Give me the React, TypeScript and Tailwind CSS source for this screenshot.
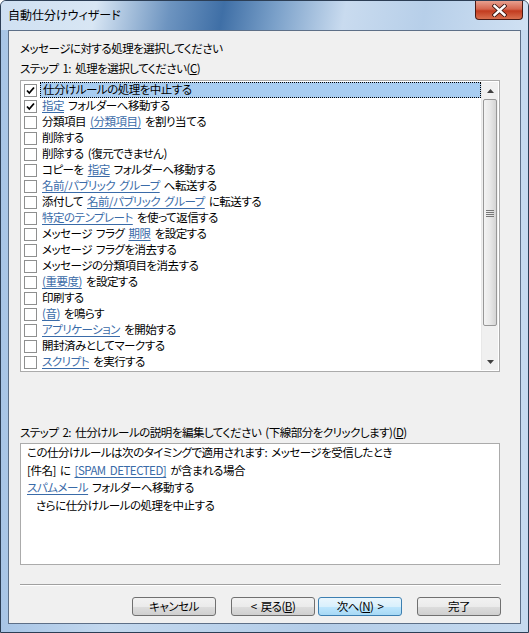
import React from 'react';

const font = "font-['Meiryo_UI','Noto_Sans_CJK_JP',sans-serif] [font-feature-settings:'palt']";

const rules: { text: string; checked?: boolean }[] = [
    { text: '仕分けルールの処理を中止する', checked: true },
    { text: '{指定} フォルダーへ移動する', checked: true },
    { text: '分類項目 {(分類項目)} を割り当てる' },
    { text: '削除する' },
    { text: '削除する (復元できません)' },
    { text: 'コピーを {指定} フォルダーへ移動する' },
    { text: '{名前/パブリック グループ} へ転送する' },
    { text: '添付して {名前/パブリック グループ} に転送する' },
    { text: '{特定のテンプレート} を使って返信する' },
    { text: 'メッセージ フラグ {期限} を設定する' },
    { text: 'メッセージ フラグを消去する' },
    { text: 'メッセージの分類項目を消去する' },
    { text: '{(重要度)} を設定する' },
    { text: '印刷する' },
    { text: '{(音)} を鳴らす' },
    { text: '{アプリケーション} を開始する' },
    { text: '開封済みとしてマークする' },
    { text: '{スクリプト} を実行する' },
];

// "{...}" marks the underlined link parts
const RuleText = ({ text }: { text: string }) => (
    <>
        {text.split(/(\{[^}]+\})/).map((part, i) =>
            part.startsWith('{') ? (
                <span key={i} className="text-[#3a6ba8] underline underline-offset-2">{part.slice(1, -1)}</span>
            ) : (
                <span key={i}>{part}</span>
            )
        )}
    </>
);

const CheckBox = ({ checked }: { checked?: boolean }) => (
    <div className="w-[13px] h-[13px] shrink-0 border border-[#8e8f8f] bg-white flex items-center justify-center">
        {checked && (
            <svg width="9" height="9" viewBox="0 0 9 9">
                <path d="M1 4.5 L3.3 7 L8 1.5" fill="none" stroke="#000" strokeWidth="1.8" />
            </svg>
        )}
    </div>
);

const Button = ({ children, primary }: { children: React.ReactNode; primary?: boolean }) => (
    <div
        className={`h-[19px] w-[84px] rounded-[3px] border flex items-center justify-center leading-none ${
            primary
                ? 'border-[#3c7fb1] bg-[linear-gradient(#eaf6fd_0%,#d9f0fc_50%,#bee6fd_51%,#a7d9f5_100%)]'
                : 'border-[#707070] bg-[linear-gradient(#f2f2f2_0%,#ebebeb_50%,#dddddd_51%,#cfcfcf_100%)]'
        }`}
    >
        {children}
    </div>
);

const ScrollBar = () => (
    <div className="w-[17px] h-full bg-[#f0f0f0] border-l border-[#e8e8e8] flex flex-col">
        <div className="h-[17px] flex items-center justify-center">
            <svg width="7" height="4" viewBox="0 0 7 4"><path d="M0 4 L3.5 0 L7 4 Z" fill="#404040" /></svg>
        </div>
        <div className="mx-[1px] h-[227px] rounded-[2px] border border-[#979797] bg-[linear-gradient(90deg,#f3f3f3,#e8e8e8_50%,#d4d4d4)] flex items-center justify-center">
            <svg width="8" height="8" viewBox="0 0 8 8">
                <path d="M0 1.5 H8 M0 3.5 H8 M0 5.5 H8 M0 7.5 H8" stroke="#777" strokeWidth="1" />
            </svg>
        </div>
        <div className="flex-1" />
        <div className="h-[17px] flex items-center justify-center">
            <svg width="7" height="4" viewBox="0 0 7 4"><path d="M0 0 L3.5 4 L7 0 Z" fill="#404040" /></svg>
        </div>
    </div>
);

export default function App() {
    return (
        <div className={`w-[529px] h-[633px] flex flex-col rounded-t-[6px] border border-[#2c3e55] bg-[linear-gradient(90deg,#a8c5e6,#c3d8ee_20%,#b4cde8_60%,#c6daef)] overflow-hidden text-black ${font}`}>
            {/* title bar */}
            <div className="h-[29px] shrink-0 flex items-start bg-[linear-gradient(100deg,#cfe0f2_0%,#d8e6f4_18%,#6d94c0_32%,#3f6fa6_42%,#7aa0c9_52%,#c9dbef_65%,#b7cfe9_80%,#d0e1f3_100%)]">
                <div className="pl-[7px] pt-[5px] text-[12px] leading-[18px] text-black">自動仕分けウィザード</div>
                <div className="flex-1" />
                <div className="mr-[5px] w-[48px] h-[19px] rounded-b-[4px] border border-t-0 border-[#4a1a14] bg-[linear-gradient(#e8a08f_0%,#d5664f_45%,#c23b1f_55%,#d9704f_100%)] flex items-center justify-center">
                    <svg width="15" height="13" viewBox="0 0 15 13">
                        <path d="M2.5 2 L12.5 11 M12.5 2 L2.5 11" stroke="#3a1510" strokeWidth="4.2" strokeLinecap="square" />
                        <path d="M2.5 2 L12.5 11 M12.5 2 L2.5 11" stroke="#fff" strokeWidth="2.4" strokeLinecap="square" />
                    </svg>
                </div>
            </div>

            {/* client area */}
            <div className="flex-1 mx-[7px] mb-[8px] border border-[#5d6f87] bg-[#f0f0f0] flex flex-col pl-[11px] pr-[19px] pt-[7px] text-[11.5px] tracking-[-0.5px] [word-spacing:2px]">
                <div className="leading-[20px]">メッセージに対する処理を選択してください</div>
                <div className="leading-[20px]">
                    ステップ 1: 処理を選択してください(<span className="underline">C</span>)
                </div>

                <div className="mt-[2px] w-[480px] h-[292px] border border-[#ababab] bg-white flex p-[1px]">
                    <div className="flex-1 flex flex-col">
                        {rules.map((r, i) => (
                            <div key={i} className="h-[16px] flex items-center">
                                <div className="pl-[2px] pr-[3px]">
                                    <CheckBox checked={r.checked} />
                                </div>
                                <div
                                    className={`h-[16px] flex-1 flex items-center pl-[2px] leading-none ${
                                        i === 0 ? 'bg-[#a8cdf1] border border-dotted border-black pl-[1px]' : ''
                                    }`}
                                >
                                    <span className="whitespace-pre">
                                        <RuleText text={r.text} />
                                    </span>
                                </div>
                            </div>
                        ))}
                    </div>
                    <ScrollBar />
                </div>

                <div className="mt-[50px] leading-[20px]">
                    ステップ 2: 仕分けルールの説明を編集してください (下線部分をクリックします)(<span className="underline">D</span>)
                </div>
                <div className="mt-[1px] w-[480px] h-[122px] border border-[#ababab] bg-white pl-[6px]">
                    <div className="leading-[17.5px]">この仕分けルールは次のタイミングで適用されます: メッセージを受信したとき</div>
                    <div className="leading-[17.5px] whitespace-pre">
                        <RuleText text="[件名] に {[SPAM DETECTED]} が含まれる場合" />
                    </div>
                    <div className="leading-[17.5px] whitespace-pre">
                        <RuleText text="{スパムメール} フォルダーへ移動する" />
                    </div>
                    <div className="leading-[17.5px] pl-[9px]">さらに仕分けルールの処理を中止する</div>
                </div>

                <div className="mt-[19px] w-[481px] h-[2px] border-t border-[#a0a0a0] border-b border-b-white" />

                <div className="mt-[11px] w-[481px] flex justify-end">
                    <Button>キャンセル</Button>
                    <div className="w-[15px]" />
                    <Button>
                        &lt; 戻る(<span className="underline">B</span>)
                    </Button>
                    <div className="w-[3px]" />
                    <Button primary>
                        次へ(<span className="underline">N</span>) &gt;
                    </Button>
                    <div className="w-[15px]" />
                    <Button>完了</Button>
                </div>
            </div>
        </div>
    );
}
